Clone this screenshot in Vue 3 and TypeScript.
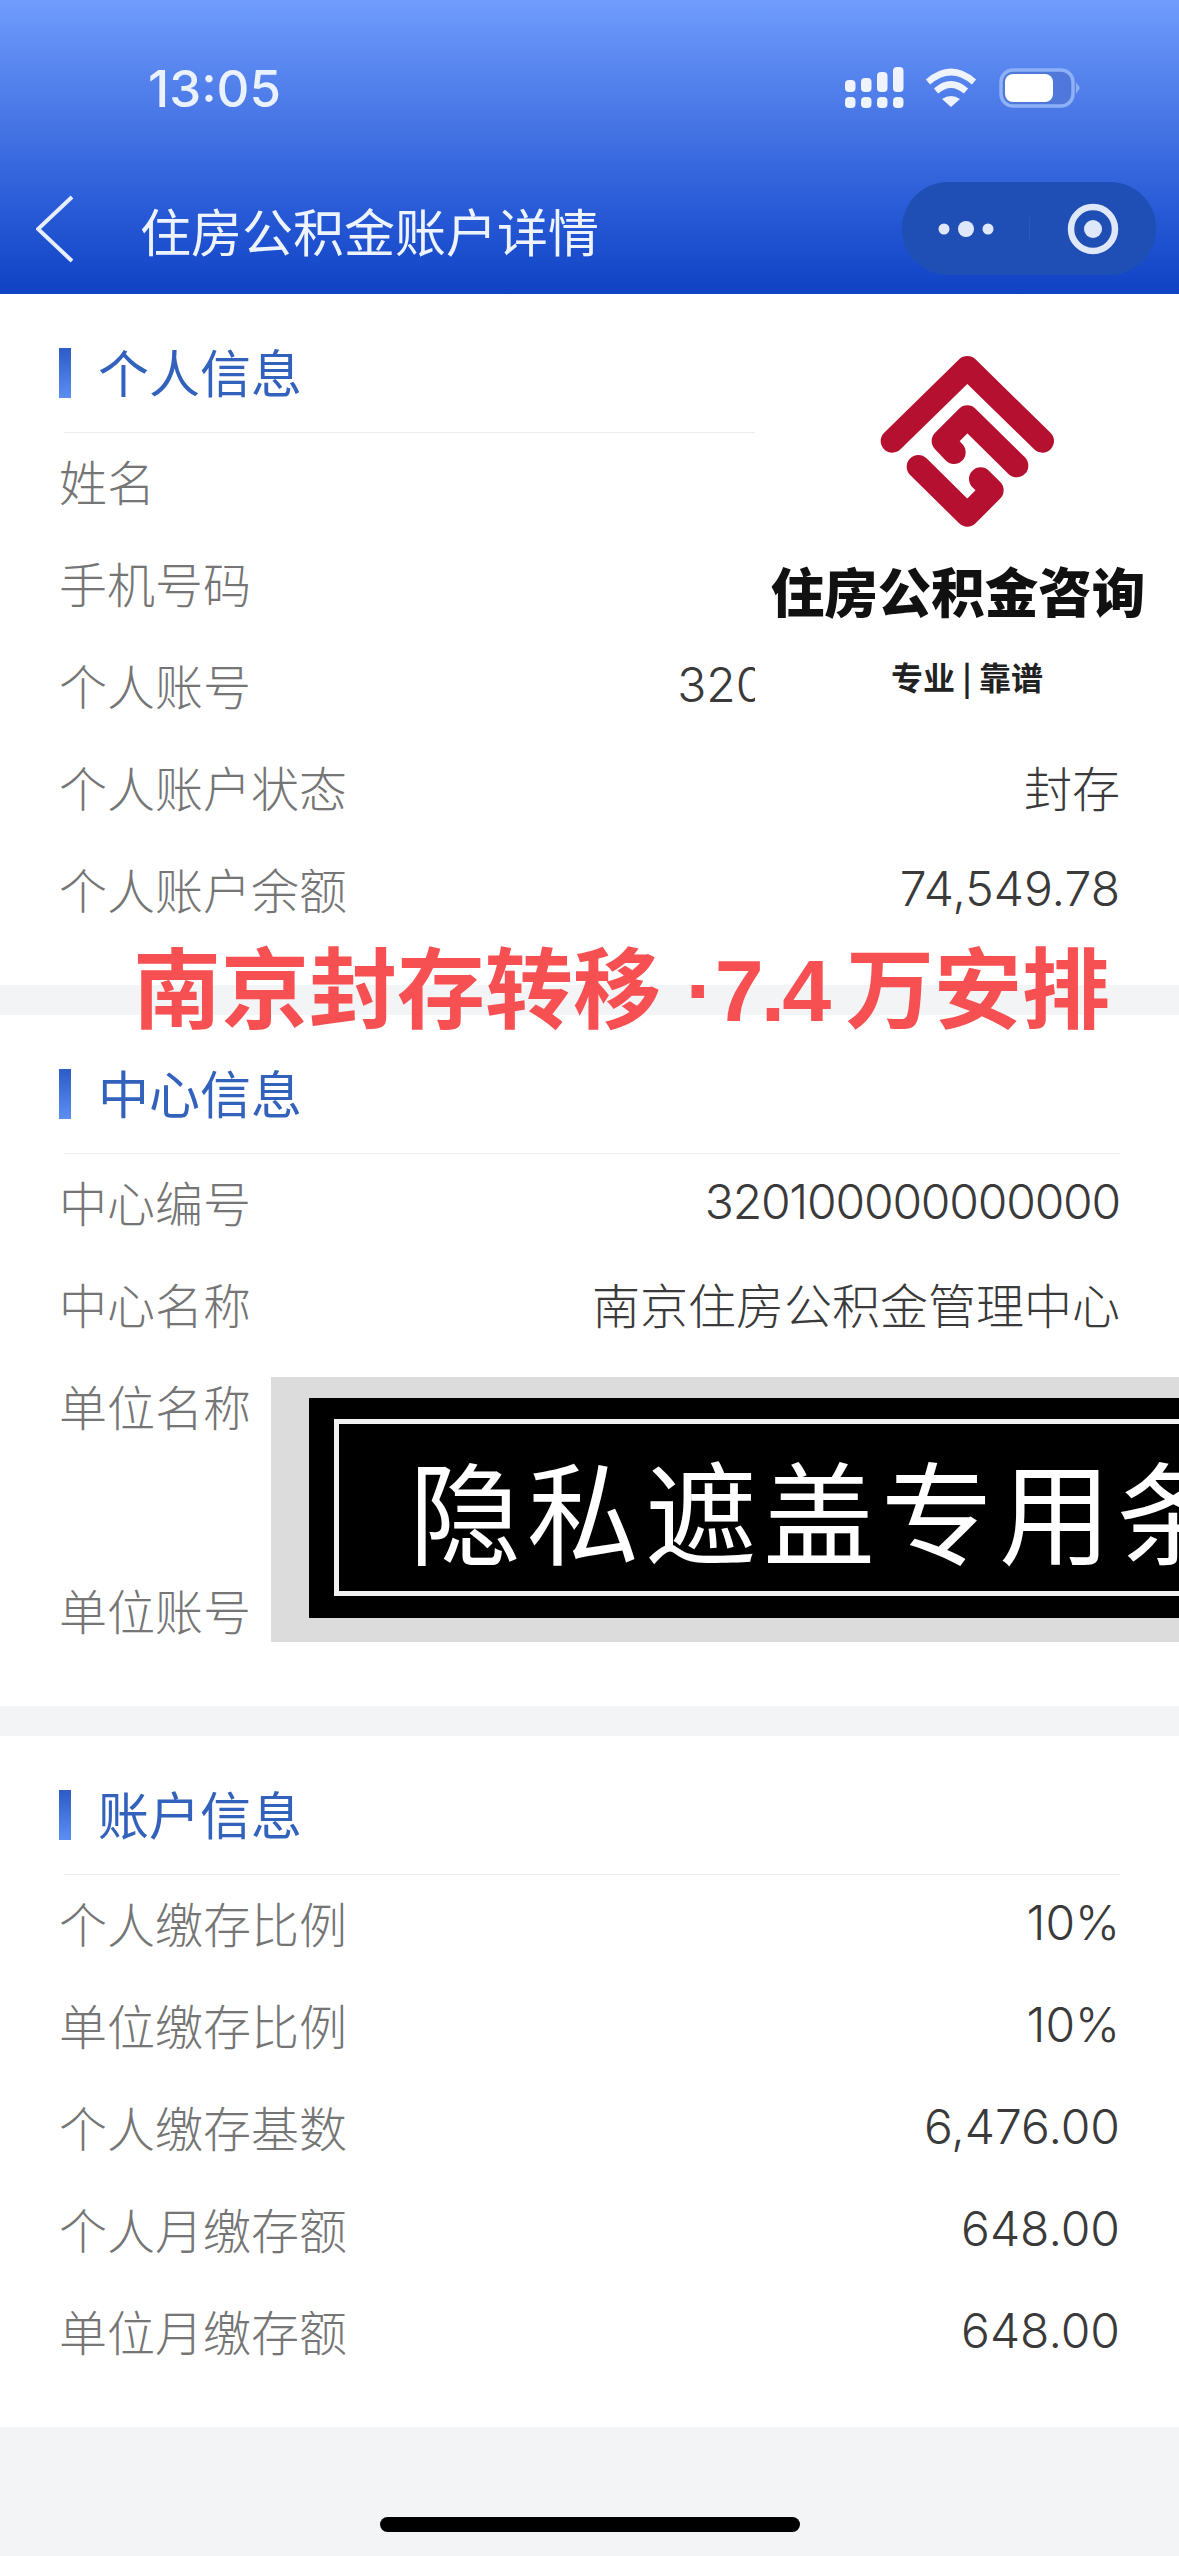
<script setup lang="ts">
interface Row {
  label: string
  value?: string
  kind?: 'cut' | 'tall' | 'tight'
}

interface Section {
  title: string
  rows: Row[]
}

const sections: Section[] = [
  {
    title: '个人信息',
    rows: [
      { label: '姓名' },
      { label: '手机号码' },
      { label: '个人账号', value: '3200', kind: 'cut' },
      { label: '个人账户状态', value: '封存' },
      { label: '个人账户余额', value: '74,549.78' },
    ],
  },
  {
    title: '中心信息',
    rows: [
      { label: '中心编号', value: '320100000000000', kind: 'tight' },
      { label: '中心名称', value: '南京住房公积金管理中心' },
      { label: '单位名称', kind: 'tall' },
      { label: '单位账号' },
    ],
  },
  {
    title: '账户信息',
    rows: [
      { label: '个人缴存比例', value: '10%' },
      { label: '单位缴存比例', value: '10%' },
      { label: '个人缴存基数', value: '6,476.00' },
      { label: '个人月缴存额', value: '648.00' },
      { label: '单位月缴存额', value: '648.00' },
    ],
  },
]

const signalTops = [80, 78, 72, 67]
</script>

<template>
  <div class="page">
    <header class="top">
      <div class="status">
        <span class="time">13:05</span>
        <div class="status-icons">
          <svg width="60" height="42" viewBox="846 67 60 42" fill="#eef3ff">
            <g v-for="(t, i) in signalTops" :key="i">
              <rect :x="846 + i * 16" :y="t" width="10.5" :height="92 - t" rx="4" />
              <rect :x="846 + i * 16" y="97" width="10.5" height="11" rx="4" />
            </g>
          </svg>
          <svg class="wifi" width="52" height="40" viewBox="0 0 52 40" fill="none" stroke="#eef3ff" stroke-width="6.5">
            <path d="M3 14 Q26 -6 49 14" />
            <path d="M11 23 Q26 10 41 23" />
            <path d="M17 31 Q26 25 35 31 L26 39 Z" fill="#eef3ff" stroke="none" />
          </svg>
          <svg class="battery" width="82" height="40" viewBox="0 0 82 40">
            <rect x="2" y="2" width="72" height="36" rx="12" fill="#4f78da" stroke="#8db0f6" stroke-width="3.5" />
            <rect x="6" y="6" width="48" height="28" rx="8" fill="#fff" />
            <path d="M77 14 L81 20 L77 26 Z" fill="#8db0f6" />
          </svg>
        </div>
      </div>
      <div class="nav">
        <svg class="back" width="38" height="68" viewBox="0 0 38 68" fill="none" stroke="#e6eeff" stroke-width="4">
          <path d="M36 2 L2 34 L36 66" />
        </svg>
        <span class="nav-title">住房公积金账户详情</span>
        <div class="capsule">
          <div class="capsule-left">
            <svg width="56" height="24" viewBox="0 0 56 24" fill="#dfe8fb">
              <circle cx="6" cy="12" r="5.5" />
              <circle cx="28" cy="12" r="8" />
              <circle cx="50" cy="12" r="5.5" />
            </svg>
          </div>
          <div class="capsule-right">
            <svg width="54" height="54" viewBox="0 0 54 54" fill="none">
              <circle cx="27" cy="27" r="22" stroke="#dfe8fb" stroke-width="6.5" />
              <circle cx="27" cy="27" r="9" fill="#dfe8fb" />
            </svg>
          </div>
        </div>
      </div>
    </header>

    <section v-for="s in sections" :key="s.title" class="section">
      <div class="section-head">
        <i class="bar"></i>
        <h2>{{ s.title }}</h2>
      </div>
      <div class="rows">
        <div v-for="r in s.rows" :key="r.label" class="row" :class="r.kind">
          <span class="label">{{ r.label }}</span>
          <span v-if="r.value" class="value">{{ r.value }}</span>
        </div>
      </div>
    </section>

    <div class="home"><i></i></div>

    <div class="brand">
      <svg width="195" height="195" viewBox="0 0 585 585" fill="none" stroke="#b5102f" stroke-width="70" stroke-linecap="round" stroke-linejoin="round">
        <path d="M67 288 L292 68 L517 288" />
        <path d="M252 322 L220 288 L292 216 L440 362" />
        <path d="M145 365 L292 510 L366 436 L332 402" />
      </svg>
      <div class="brand-name">住房公积金咨询</div>
      <div class="brand-sub">专业 | 靠谱</div>
    </div>

    <div class="headline">南京封存转移 ·<span class="num">7.4</span>万安排</div>

    <div class="mask">
      <div class="mask-black">
        <div class="mask-line">隐私遮盖专用条</div>
      </div>
    </div>
  </div>
</template>

<style>
html,
body {
  margin: 0;
  background: #f3f4f6;
}
</style>

<style scoped>
.page {
  position: relative;
  width: 1179px;
  height: 2556px;
  overflow: hidden;
  background: #f3f4f6;
  font-family: Inter, "Noto Sans CJK SC", sans-serif;
}
.top {
  box-sizing: border-box;
  height: 294px;
  padding-top: 67px;
  background: linear-gradient(180deg, #6f9cfd 0%, #4a78e6 38%, #2a5cd8 70%, #0f42c4 100%);
  color: #fff;
}
.status {
  display: flex;
  align-items: center;
  justify-content: space-between;
  height: 42px;
  padding: 0 98px 0 148px;
}
.time {
  font-size: 51px;
  font-weight: 500;
  color: #eaf1ff;
}
.status-icons {
  display: flex;
  align-items: center;
  gap: 20px;
}
.wifi {
  margin-right: 2px;
}
.nav {
  display: flex;
  align-items: center;
  height: 93px;
  margin-top: 73px;
  padding: 0 23px 0 36px;
}
.back {
  flex: none;
}
.nav-title {
  margin-left: 66px;
  padding-top: 2px;
  font-family: "Noto Sans CJK SC", sans-serif;
  font-size: 51px;
  font-weight: 400;
  color: #eef4ff;
}
.capsule {
  display: flex;
  align-items: center;
  width: 254px;
  height: 93px;
  margin-left: auto;
  border-radius: 46px;
  background: #1f4fb4;
}
.capsule-left {
  display: flex;
  justify-content: center;
  width: 127px;
  border-right: 1px solid #2a59bd;
}
.capsule-right {
  display: flex;
  justify-content: center;
  flex: 1;
}
.section {
  padding: 54px 59px 42px;
  margin-bottom: 30px;
  background: #fff;
}
.section:last-of-type {
  margin-bottom: 0;
}
.section-head {
  display: flex;
  align-items: center;
  height: 50px;
  padding-bottom: 34px;
}
.bar {
  width: 12px;
  height: 50px;
  background: linear-gradient(180deg, #2c5cc4, #5c8ef2);
}
h2 {
  margin: 0 0 0 27px;
  padding-bottom: 5px;
  font-family: "Noto Sans CJK SC", sans-serif;
  font-size: 51px;
  font-weight: 400;
  line-height: 50px;
  color: #3262bc;
}
.rows::before {
  content: "";
  display: block;
  height: 1px;
  margin-left: 5px;
  background: #ececec;
}
.row {
  box-sizing: border-box;
  display: flex;
  align-items: center;
  justify-content: space-between;
  height: 102px;
  padding-bottom: 8px;
  font-size: 48px;
}
.row.tall {
  align-items: flex-start;
  height: 204px;
}
.row.tall .label {
  line-height: 94px;
}
.row.tight .value {
  letter-spacing: -1.2px;
}
.label {
  font-family: "Noto Sans CJK SC", sans-serif;
  font-weight: 300;
  color: #757575;
}
.value {
  font-weight: 300;
  color: #3a3a3a;
}
.row.cut .value {
  margin-right: 325px;
}
.home {
  display: flex;
  justify-content: center;
  padding-top: 90px;
}
.home i {
  width: 420px;
  height: 15px;
  border-radius: 8px;
  background: #000;
}
.brand {
  position: absolute;
  top: 296px;
  left: 755px;
  box-sizing: border-box;
  display: flex;
  flex-direction: column;
  align-items: center;
  width: 424px;
  height: 444px;
  padding-top: 49px;
  background: #fff;
}
.brand-name {
  margin-top: 20px;
  margin-right: 18px;
  font-family: "Noto Sans CJK SC", sans-serif;
  font-size: 53.5px;
  font-weight: 900;
  line-height: 60px;
  white-space: nowrap;
  color: #111;
}
.brand-sub {
  margin-top: 36px;
  font-family: "Noto Sans CJK SC", sans-serif;
  font-size: 32px;
  font-weight: 700;
  line-height: 40px;
  color: #222;
}
.headline {
  position: absolute;
  top: 932px;
  left: 133px;
  font-family: "Liberation Sans", "Noto Sans CJK SC", sans-serif;
  font-size: 88px;
  font-weight: 700;
  line-height: 118px;
  white-space: nowrap;
  color: #f75052;
}
.num {
  margin-right: 18px;
  letter-spacing: -3px;
}
.mask {
  position: absolute;
  top: 1377px;
  left: 271px;
  box-sizing: border-box;
  width: 920px;
  height: 265px;
  padding: 21px 0 24px 38px;
  background: #dcdcdc;
}
.mask-black {
  box-sizing: border-box;
  height: 100%;
  padding: 21px 0 22px 25px;
  background: #000;
}
.mask-line {
  box-sizing: border-box;
  display: flex;
  align-items: center;
  height: 100%;
  padding-left: 70px;
  border: 5px solid #f2f2f2;
  border-right: 0;
  font-family: "Noto Sans CJK SC", sans-serif;
  font-size: 112px;
  font-weight: 400;
  letter-spacing: 6px;
  white-space: nowrap;
  color: #fff;
}
</style>
